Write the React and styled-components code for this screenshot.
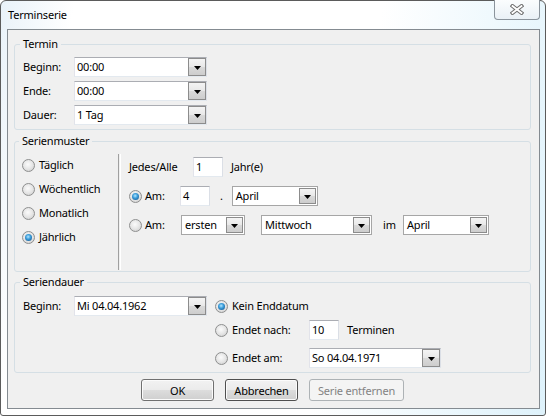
import React from 'react';
import styled, { createGlobalStyle, css } from 'styled-components';

const GlobalStyle = createGlobalStyle`
  body {
    margin: 0;
    background: #ffffff;
    font-family: "Noto Sans", "Open Sans", sans-serif;
    font-size: 11px;
    letter-spacing: -0.2px;
    color: #000;
  }
`;

function App() {
  return (
    <>
      <GlobalStyle />
      <Window>
        <TitleBar>
          <Title>Terminserie</Title>
          <CloseButton>
            <svg width="14" height="11" viewBox="0 0 14 11">
              <path d="M2.5 2 L11.5 9 M11.5 2 L2.5 9" stroke="#6f6f6f" strokeWidth="3.8" strokeLinecap="square" />
              <path d="M2.5 2 L11.5 9 M11.5 2 L2.5 9" stroke="#ffffff" strokeWidth="1.8" strokeLinecap="square" />
            </svg>
          </CloseButton>
        </TitleBar>

        <Client>
          <Group>
            <Legend>Termin</Legend>
            <Rows $gap={4}>
              <Row>
                <Label $w={51}>Beginn:</Label>
                <Combo w={133} value="00:00" />
              </Row>
              <Row>
                <Label $w={51}>Ende:</Label>
                <Combo w={133} value="00:00" />
              </Row>
              <Row>
                <Label $w={51}>Dauer:</Label>
                <Combo w={133} value="1 Tag" />
              </Row>
            </Rows>
          </Group>

          <Group $mt={3} $pad="8px 8px 1px 7px">
            <Legend>Serienmuster</Legend>
            <PatternBody>
              <KindColumn>
                <Option label="Täglich" />
                <Option label="Wöchentlich" />
                <Option label="Monatlich" />
                <Option label="Jährlich" checked />
              </KindColumn>
              <Divider />
              <DetailColumn>
                <Row>
                  <Label $w={64}>Jedes/Alle</Label>
                  <TextBox $w={30}>1</TextBox>
                  <Label $ml={8}>Jahr(e)</Label>
                </Row>
                <Row>
                  <Radio $checked />
                  <Label $w={35} $ml={3}>Am:</Label>
                  <TextBox $w={30}>4</TextBox>
                  <Label $ml={10} $mr={9}>.</Label>
                  <Combo w={86} value="April" list />
                </Row>
                <Row>
                  <Radio />
                  <Label $w={36} $ml={3}>Am:</Label>
                  <Combo w={64} value="ersten" list />
                  <Combo w={111} value="Mittwoch" list ml={16} />
                  <Label $w={20} $ml={11}>im</Label>
                  <Combo w={86} value="April" list />
                </Row>
              </DetailColumn>
            </PatternBody>
          </Group>

          <Group $mt={2} $pad="6px 8px 4px">
            <Legend>Seriendauer</Legend>
            <RangeBody>
              <Row>
                <Label $w={51}>Beginn:</Label>
                <Combo w={133} value="Mi 04.04.1962" />
              </Row>
              <RangeEnd>
                <Row>
                  <Radio $checked />
                  <Label $ml={4}>Kein Enddatum</Label>
                </Row>
                <Row $mt={4}>
                  <Radio />
                  <Label $w={77} $ml={4}>Endet nach:</Label>
                  <TextBox $w={30}>10</TextBox>
                  <Label $ml={8}>Terminen</Label>
                </Row>
                <Row $mt={8}>
                  <Radio />
                  <Label $w={77} $ml={4}>Endet am:</Label>
                  <Combo w={132} value="So 04.04.1971" />
                </Row>
              </RangeEnd>
            </RangeBody>
          </Group>

          <ButtonBar>
            <Button $w={73}>OK</Button>
            <Button $w={73} $focus>Abbrechen</Button>
            <Button $w={95} disabled>Serie entfernen</Button>
          </ButtonBar>
        </Client>
      </Window>
    </>
  );
}

function Combo({ w, value, list, ml }) {
  return (
    <ComboBox $w={w} $list={list} $ml={ml}>
      <ComboText>{value}</ComboText>
      <DropButton $list={list}>
        <svg width="7" height="4" viewBox="0 0 7 4">
          <path d="M0 0 H7 L3.5 4 Z" fill="#000" />
        </svg>
      </DropButton>
    </ComboBox>
  );
}

function Option({ label, checked }) {
  return (
    <Row>
      <Radio $checked={checked} />
      <Label $ml={4}>{label}</Label>
    </Row>
  );
}

export default App;

const Window = styled.div`
  width: 546px;
  box-sizing: border-box;
  border: 1px solid #5b5b5b;
  border-radius: 6px 6px 3px 3px;
  padding-bottom: 6px;
  background: linear-gradient(100deg, #e9f2f9 0%, #ffffff 12%, #ffffff 62%, #def2fb 100%);
`;

const TitleBar = styled.div`
  height: 28px;
  display: flex;
  align-items: flex-start;
`;

const Title = styled.div`
  margin: 6px 0 0 7px;
  line-height: 16px;
  font-size: 11px;
`;

const CloseButton = styled.div`
  margin: -1px 5px 0 auto;
  width: 46px;
  height: 20px;
  box-sizing: border-box;
  border: 1px solid #8b949c;
  border-top: none;
  border-radius: 0 0 4px 4px;
  background: linear-gradient(#fbfdfe, #eaf1f6);
  display: flex;
  align-items: center;
  justify-content: center;
`;

const Client = styled.div`
  margin: 0 5px 0 6px;
  border: 1px solid #848b91;
  background: #f0f0f0;
  padding: 6px 8px 7px 6px;
  display: flex;
  flex-direction: column;
`;

const Group = styled.fieldset`
  margin: ${p => p.$mt || 0}px 0 0 0;
  padding: ${p => p.$pad || '5px 8px 4px'};
  border: 1px solid #d5dfe5;
  border-radius: 3px;
  min-width: 0;
`;

const Legend = styled.legend`
  padding: 0 3px;
  margin-left: -3px;
  line-height: 16px;
`;

const Rows = styled.div`
  display: flex;
  flex-direction: column;
  gap: ${p => p.$gap || 0}px;
`;

const Row = styled.div`
  display: flex;
  align-items: center;
  height: 20px;
  margin-top: ${p => p.$mt || 0}px;
`;

const Label = styled.span`
  flex: none;
  width: ${p => (p.$w ? `${p.$w}px` : 'auto')};
  margin-left: ${p => p.$ml || 0}px;
  margin-right: ${p => p.$mr || 0}px;
  line-height: 16px;
  white-space: nowrap;
`;

const fieldBorder = css`
  box-sizing: border-box;
  height: 20px;
  border: 1px solid;
  border-color: #abadb3 #dbdfe6 #e3e9ef #e2e3ea;
  background: #fff;
`;

const TextBox = styled.div`
  ${fieldBorder};
  flex: none;
  width: ${p => p.$w}px;
  padding-left: 2px;
  line-height: 18px;
`;

const ComboBox = styled.div`
  ${fieldBorder};
  flex: none;
  display: flex;
  width: ${p => p.$w}px;
  margin-left: ${p => p.$ml || 0}px;
  ${p => p.$list && css`
    border-color: #a6a6a6;
    padding: 1px;
  `}
`;

const ComboText = styled.div`
  flex: 1;
  padding-left: 2px;
  line-height: 18px;
  white-space: nowrap;
  overflow: hidden;
  align-self: center;
`;

const DropButton = styled.div`
  flex: none;
  width: ${p => (p.$list ? 17 : 18)}px;
  box-sizing: border-box;
  border: 1px solid #8c8c8c;
  background: linear-gradient(#f4f4f4 0%, #e8e8e8 50%, #d9d9d9 51%, #cdcdcd 100%);
  display: flex;
  align-items: center;
  justify-content: center;
  padding-top: 1px;
`;

const Radio = styled.span`
  position: relative;
  flex: none;
  width: 13px;
  height: 13px;
  box-sizing: border-box;
  border-radius: 50%;
  border: 1px solid #8e8f8f;
  background: radial-gradient(circle at 45% 40%, #fbfbfb 0%, #e6e6e6 50%, #c8c8c8 100%);
  ${p => p.$checked && css`
    &::after {
      content: '';
      position: absolute;
      left: 2px;
      top: 2px;
      width: 7px;
      height: 7px;
      border-radius: 50%;
      background: radial-gradient(circle at 45% 40%, #b3e6ff 0%, #3d9fdc 40%, #0b467f 100%);
    }
  `}
`;

const PatternBody = styled.div`
  display: flex;
  height: 113px;
`;

const KindColumn = styled.div`
  width: 96px;
  margin-top: -2px;
  display: flex;
  flex-direction: column;
  gap: 4px;
`;

const Divider = styled.div`
  width: 1px;
  margin-top: -3px;
  border-left: 1px solid #a0a0a0;
  border-right: 1px solid #ffffff;
`;

const DetailColumn = styled.div`
  padding-left: 8px;
  display: flex;
  flex-direction: column;
  gap: 9px;
`;

const RangeBody = styled.div`
  display: flex;
  align-items: flex-start;
  gap: 8px;
`;

const RangeEnd = styled.div`
  display: flex;
  flex-direction: column;
`;

const ButtonBar = styled.div`
  margin-top: 6px;
  display: flex;
  justify-content: center;
  gap: 11px;
`;

const Button = styled.button`
  width: ${p => p.$w}px;
  height: 22px;
  box-sizing: border-box;
  padding: 0;
  border: 1px solid ${p => (p.$focus ? '#4f4f4f' : '#707070')};
  border-radius: 3px;
  background: linear-gradient(#f2f2f2 0%, #ebebeb 50%, #dddddd 51%, #cfcfcf 100%);
  box-shadow: inset 0 0 0 1px #fbfbfb;
  font: inherit;
  letter-spacing: inherit;
  color: #000;
  &:disabled {
    border-color: #adb2b5;
    background: #f4f4f4;
    box-shadow: none;
    color: #838383;
  }
`;
